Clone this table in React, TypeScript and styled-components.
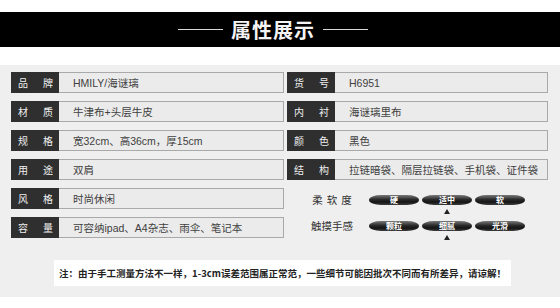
import styled, { createGlobalStyle } from 'styled-components';

type Spec = { label: [string, string]; value: string };

const leftSpecs: Spec[] = [
    { label: ['品', '牌'], value: 'HMILY/海谜璃' },
    { label: ['材', '质'], value: '牛津布+头层牛皮' },
    { label: ['规', '格'], value: '宽32cm、高36cm，厚15cm' },
    { label: ['用', '途'], value: '双肩' },
    { label: ['风', '格'], value: '时尚休闲' },
    { label: ['容', '量'], value: '可容纳ipad、A4杂志、雨伞、笔记本' },
];

const rightSpecs: Spec[] = [
    { label: ['货', '号'], value: 'H6951' },
    { label: ['内', '衬'], value: '海谜璃里布' },
    { label: ['颜', '色'], value: '黑色' },
    { label: ['结', '构'], value: '拉链暗袋、隔层拉链袋、手机袋、证件袋' },
];

// 柔软度 / 触摸手感 – 가운데 선택
const ratings = [
    { name: '柔软度', spaced: true, options: ['硬', '适中', '软'], selected: 1 },
    { name: '触摸手感', spaced: false, options: ['颗粒', '细腻', '光滑'], selected: 1 },
];

const SpecRow = ({ label, value }: Spec) => (
    <Row>
        <Label>
            <span>{label[0]}</span>
            <span>{label[1]}</span>
        </Label>
        <Value>{value}</Value>
    </Row>
);

const App = () => {
    return (
        <>
            <GlobalStyle />
            <Page>
                <Header>
                    <Line />
                    <Title>属性展示</Title>
                    <Line />
                </Header>
                <Panel>
                    <Columns>
                        <Column>
                            {leftSpecs.map(s => <SpecRow key={s.value} {...s} />)}
                        </Column>
                        <Column>
                            {rightSpecs.map(s => <SpecRow key={s.value} {...s} />)}
                            <Ratings>
                                {ratings.map(r => (
                                    <RatingRow key={r.name}>
                                        <RatingName $spaced={r.spaced}>{r.name}</RatingName>
                                        <Options>
                                            {r.options.map((o, i) => (
                                                <Option key={o}>
                                                    <Pill>{o}</Pill>
                                                    <Arrow $on={i === r.selected} />
                                                </Option>
                                            ))}
                                        </Options>
                                    </RatingRow>
                                ))}
                            </Ratings>
                        </Column>
                    </Columns>
                    <Note>注：由于手工测量方法不一样，1-3cm误差范围属正常范，一些细节可能因批次不同而有所差异，请谅解！</Note>
                </Panel>
            </Page>
        </>
    );
};

export default App;

// styled-components

const GlobalStyle = createGlobalStyle`
    body {
        margin: 0;
        background: #ffffff;
        font-family: "Liberation Sans", "Noto Sans CJK SC", sans-serif;
    }
`;

const Page = styled.div`
    width: 560px;
    height: 308px;
    padding-top: 12px;
    box-sizing: border-box;
    overflow: hidden;
`;

const Header = styled.div`
    height: 35px;
    background: #000000;
    display: flex;
    align-items: center;
    justify-content: center;
    gap: 8px;
    padding-right: 14px;
`;

const Line = styled.div`
    width: 45px;
    height: 1px;
    background: #d8d8d8;
`;

const Title = styled.h1`
    margin: 0;
    color: #f4f4f4;
    font-family: "Noto Sans CJK SC", sans-serif;
    font-size: 20px;
    font-weight: 700;
    letter-spacing: 1px;
    line-height: 1;
`;

const Panel = styled.div`
    margin-top: 18px;
    background: #efefef;
    padding: 7px 0 11px;
`;

const Columns = styled.div`
    display: grid;
    grid-template-columns: 273px 261px;
    column-gap: 3px;
    padding-left: 11px;
`;

const Column = styled.div`
    display: flex;
    flex-direction: column;
    gap: 8px;
`;

const Row = styled.div`
    display: flex;
    height: 21px;
`;

const Label = styled.div`
    width: 48px;
    flex: none;
    background: #2f2f2f;
    color: #f0f0f0;
    font-family: "Noto Sans CJK SC", sans-serif;
    font-size: 10px;
    display: flex;
    align-items: center;
    justify-content: space-between;
    padding: 0 6px 0 7px;
    box-sizing: border-box;
`;

const Value = styled.div`
    flex: 1;
    background: #ebebeb;
    border: 1px solid #a9a9a9;
    border-left: none;
    color: #404040;
    font-size: 10.5px;
    display: flex;
    align-items: center;
    padding-left: 14px;
`;

const Ratings = styled.div`
    display: flex;
    flex-direction: column;
    gap: 0;
    padding-top: 7px;
`;

const RatingRow = styled.div`
    display: flex;
    align-items: flex-start;
    height: 26px;
`;

const RatingName = styled.div<{ $spaced: boolean }>`
    width: 70px;
    margin-left: 10px;
    margin-top: -2px;
    text-align: center;
    color: #333333;
    font-family: "Noto Sans CJK SC", sans-serif;
    font-size: 10.5px;
    line-height: 14px;
    letter-spacing: ${p => (p.$spaced ? '4px' : '0')};
    text-indent: ${p => (p.$spaced ? '4px' : '0')};
`;

const Options = styled.div`
    display: flex;
    gap: 3px;
    margin-left: 2px;
`;

const Option = styled.div`
    display: flex;
    flex-direction: column;
    align-items: center;
`;

const Pill = styled.div`
    width: 50px;
    height: 10px;
    border-radius: 12px / 5px;
    background: linear-gradient(#7a7a7a 0%, #2a2a2a 45%, #151515 70%, #3c3c3c 100%);
    color: #ffffff;
    font-family: "Noto Sans CJK SC", sans-serif;
    font-size: 8px;
    font-weight: 700;
    line-height: 10px;
    text-align: center;
    overflow: hidden;
`;

const Arrow = styled.div<{ $on: boolean }>`
    width: 0;
    height: 0;
    margin-top: 4px;
    border-left: 3px solid transparent;
    border-right: 3px solid transparent;
    border-bottom: 5px solid #222222;
    visibility: ${p => (p.$on ? 'visible' : 'hidden')};
`;

const Note = styled.div`
    margin: 13px 0 0 54px;
    width: 457px;
    height: 26px;
    background: #ffffff;
    color: #222222;
    font-family: "Noto Sans CJK SC", sans-serif;
    font-size: 9.5px;
    font-weight: 700;
    display: flex;
    align-items: center;
    justify-content: center;
`;
